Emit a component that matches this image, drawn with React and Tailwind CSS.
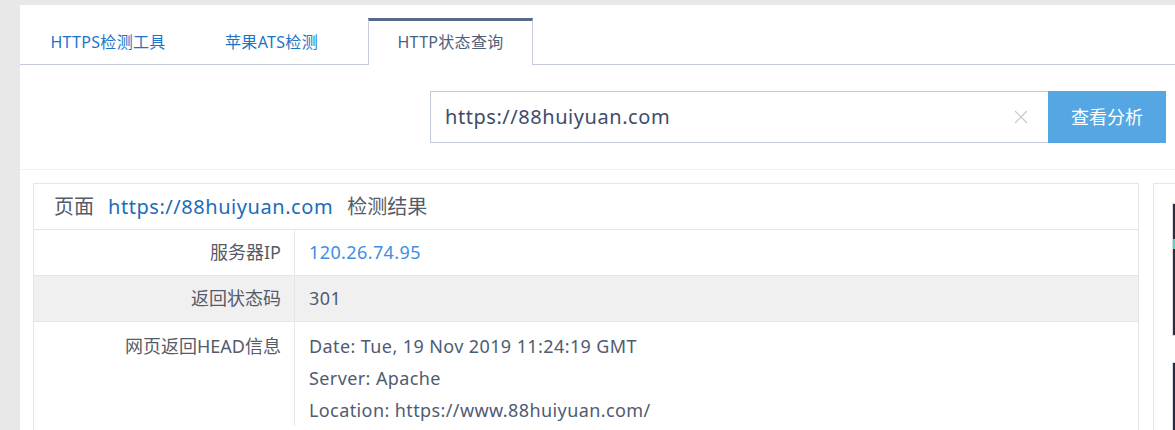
import { X } from "lucide-react";

const FONT = "font-['Noto_Sans','Noto_Sans_CJK_SC',sans-serif]";

const tabs = [
  { label: "HTTPS检测工具", width: "w-[174px]", active: false },
  { label: "苹果ATS检测", width: "w-[153px]", active: false },
  { label: "HTTP状态查询", width: "w-[165px]", active: true },
];

const headLines = [
  "Date: Tue, 19 Nov 2019 11:24:19 GMT",
  "Server: Apache",
  "Location: https://www.88huiyuan.com/",
];

function Row({ label, gray, children, top, last }) {
  return (
    <div className={`flex ${last ? "" : "border-b border-[#e6e6e6]"} ${gray ? "bg-[#f0f0f0]" : ""}`}>
      <div
        className={`w-[261px] shrink-0 border-r border-[#e6e6e6] pr-[13px] text-right text-[#555b68] ${
          top ? "pt-[8px] leading-[32px]" : "leading-[45px]"
        }`}
      >
        {label}
      </div>
      <div
        className={`flex-1 pl-[14px] tracking-[0.4px] ${top ? "pt-[8px] leading-[32px]" : "leading-[45px]"}`}
      >
        {children}
      </div>
    </div>
  );
}

export default function App() {
  return (
    <div className={`${FONT} h-[430px] overflow-hidden bg-[#e8e8e8] pl-[20px] pt-[5px]`}>
      <div className="h-full bg-white">
        {/* tabs */}
        <div className="flex border-b border-[#c3cbdc] pl-[1px] pt-[13px]">
          {tabs.map((tab) =>
            tab.active ? (
              <div
                key={tab.label}
                className={`${tab.width} ml-[20px] -mb-px h-[47px] border-x border-t-[3px] border-x-[#c3cbdc] border-t-[#566a88] bg-white text-center text-[16px] leading-[42px] tracking-[0.3px] text-[#4f5f7d]`}
              >
                {tab.label}
              </div>
            ) : (
              <div
                key={tab.label}
                className={`${tab.width} h-[46px] pt-[3px] text-center text-[16px] leading-[42px] tracking-[0.3px] text-[#1c74c9]`}
              >
                {tab.label}
              </div>
            )
          )}
        </div>

        {/* search */}
        <div className="flex justify-end border-b border-[#f0f0f0] py-[26px] pr-[9px]">
          <div className="flex h-[52px] w-[618px] items-center border border-r-0 border-[#c3cbdc] pl-[14px] pr-[16px]">
            <span className="flex-1 text-[20px] tracking-[0.55px] text-[#3f4c69]">
              https://88huiyuan.com
            </span>
            <X size={22} strokeWidth={1.3} className="text-[#c6c6c6]" />
          </div>
          <button
            type="button"
            className="h-[52px] w-[118px] bg-[#55a7e3] text-[18px] text-white"
          >
            查看分析
          </button>
        </div>

        {/* results */}
        <div className="mt-[13px] flex gap-[14px] pl-[13px]">
          <div className="w-[1106px] shrink-0 border border-b-0 border-[#e6e6e6]">
            <div className="h-[46px] border-b border-[#e6e6e6] pl-[20px] text-[20px] leading-[45px]">
              <span className="text-[#555b68]">页面</span>
              <span className="ml-[14px] tracking-[0.55px] text-[#1b6db8]">https://88huiyuan.com</span>
              <span className="ml-[14px] text-[#555b68]">检测结果</span>
            </div>
            <div className="text-[18px] text-[#4f5b73]">
              <Row label="服务器IP">
                <span className="text-[#3d8fe2]">120.26.74.95</span>
              </Row>
              <Row label="返回状态码" gray>
                301
              </Row>
              <Row label="网页返回HEAD信息" top last>
                {headLines.map((line) => (
                  <div key={line}>{line}</div>
                ))}
              </Row>
            </div>
          </div>

          <div className="w-[200px] shrink-0 border border-b-0 border-[#e6e6e6] pl-[18px] pt-[19px]">
            <div className="h-[133px] w-[150px] border border-[#dcdcdc] bg-[#2b2f3d] pt-[35px]">
              <div className="h-[10px] w-full bg-[#4fd8c0]" />
            </div>
            <div className="mt-[26px] h-[80px] w-[150px] border border-[#dcdcdc] bg-[#262a4a]" />
          </div>
        </div>
      </div>
    </div>
  );
}
